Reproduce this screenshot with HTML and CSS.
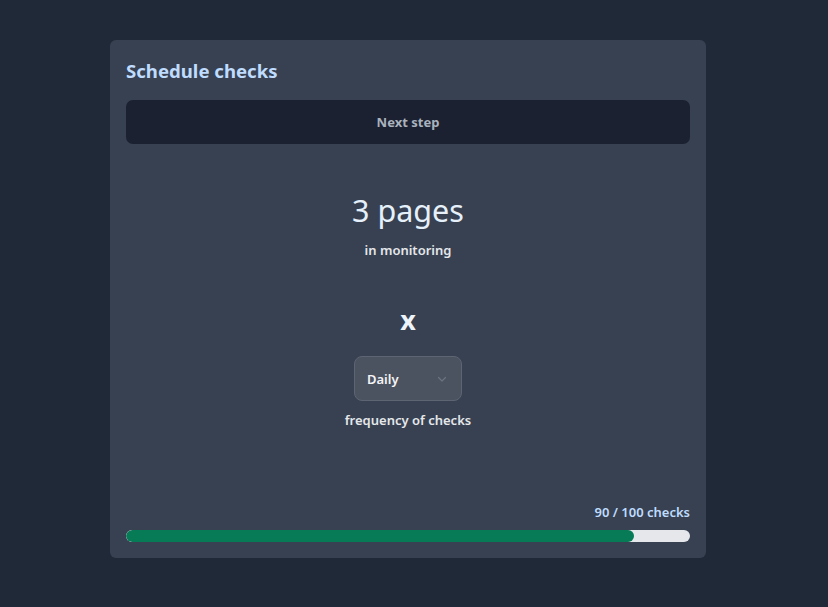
FILE: index.html
```html
<!DOCTYPE html>
<html lang="en">
<head>
    <meta charset="UTF-8">
    <meta name="viewport" content="width=device-width, initial-scale=1.0">
    <title>Schedule checks</title>
    <link rel="stylesheet" href="styles.css">
</head>
<body>
    <div class="card">
        <h1 class="title">Schedule checks</h1>

        <button class="next-btn">Next step</button>

        <div class="summary">
            <div class="pages">3 pages</div>
            <div class="caption">in monitoring</div>

            <div class="times">x</div>

            <div class="select">
                <span>Daily</span>
                <svg width="12" height="12" viewBox="0 0 12 12" fill="none">
                    <path d="M2.5 4.5 L6 8 L9.5 4.5" stroke="#6b7280" stroke-width="1.2" stroke-linecap="round" stroke-linejoin="round"/>
                </svg>
            </div>
            <div class="caption freq">frequency of checks</div>
        </div>

        <div class="usage">
            <div class="usage-label">90 / 100 checks</div>
            <div class="bar">
                <div class="bar-fill" style="width: 90%"></div>
            </div>
        </div>
    </div>
</body>
</html>
```

FILE: styles.css
```css
body {
    margin: 0;
    padding: 40px 0 0 110px;
    background: #1f2937;
    font-family: 'Noto Sans', 'Open Sans', sans-serif;
    color: #e5e7eb;
}

.card {
    width: 564px;
    height: 486px;
    padding: 16px;
    background: #374151;
    border-radius: 6px;
    display: flex;
    flex-direction: column;
}

.title {
    margin: 1px 0 -1px;
    font-size: 18.6px;
    line-height: 28px;
    font-weight: 700;
    color: #bfdbfe;
}

.next-btn {
    margin-top: 16px;
    height: 44px;
    width: 100%;
    border: none;
    border-radius: 7px;
    background: #1b2130;
    color: #aab2be;
    font-family: inherit;
    font-size: 13px;
    font-weight: 700;
}

.summary {
    display: flex;
    flex-direction: column;
    align-items: center;
    margin-top: 48px;
}

.pages {
    font-size: 30.5px;
    line-height: 36px;
    color: #e6f0fb;
}

.caption {
    margin-top: 13px;
    font-size: 13px;
    line-height: 18px;
    font-weight: 600;
    color: #e5e7eb;
}

.times {
    margin-top: 45px;
    font-size: 27px;
    line-height: 32px;
    font-weight: 700;
    color: #eef4fc;
}

.select {
    margin-top: 20px;
    box-sizing: border-box;
    width: 108px;
    height: 45px;
    padding: 0 13px 0 12px;
    display: flex;
    align-items: center;
    justify-content: space-between;
    background: #4b5260;
    border: 1px solid #5d6472;
    border-radius: 8px;
    font-size: 13px;
    font-weight: 600;
    color: #f3f4f6;
}

.caption.freq {
    margin-top: 10px;
}

.usage {
    margin-top: auto;
}

.usage-label {
    text-align: right;
    font-size: 13px;
    line-height: 18px;
    font-weight: 600;
    color: #bfdbfe;
    margin-bottom: 9px;
}

.bar {
    height: 12px;
    border-radius: 6px;
    background: #e5e7eb;
    overflow: hidden;
}

.bar-fill {
    height: 100%;
    border-radius: 6px;
    background: #077a56;
}
```
